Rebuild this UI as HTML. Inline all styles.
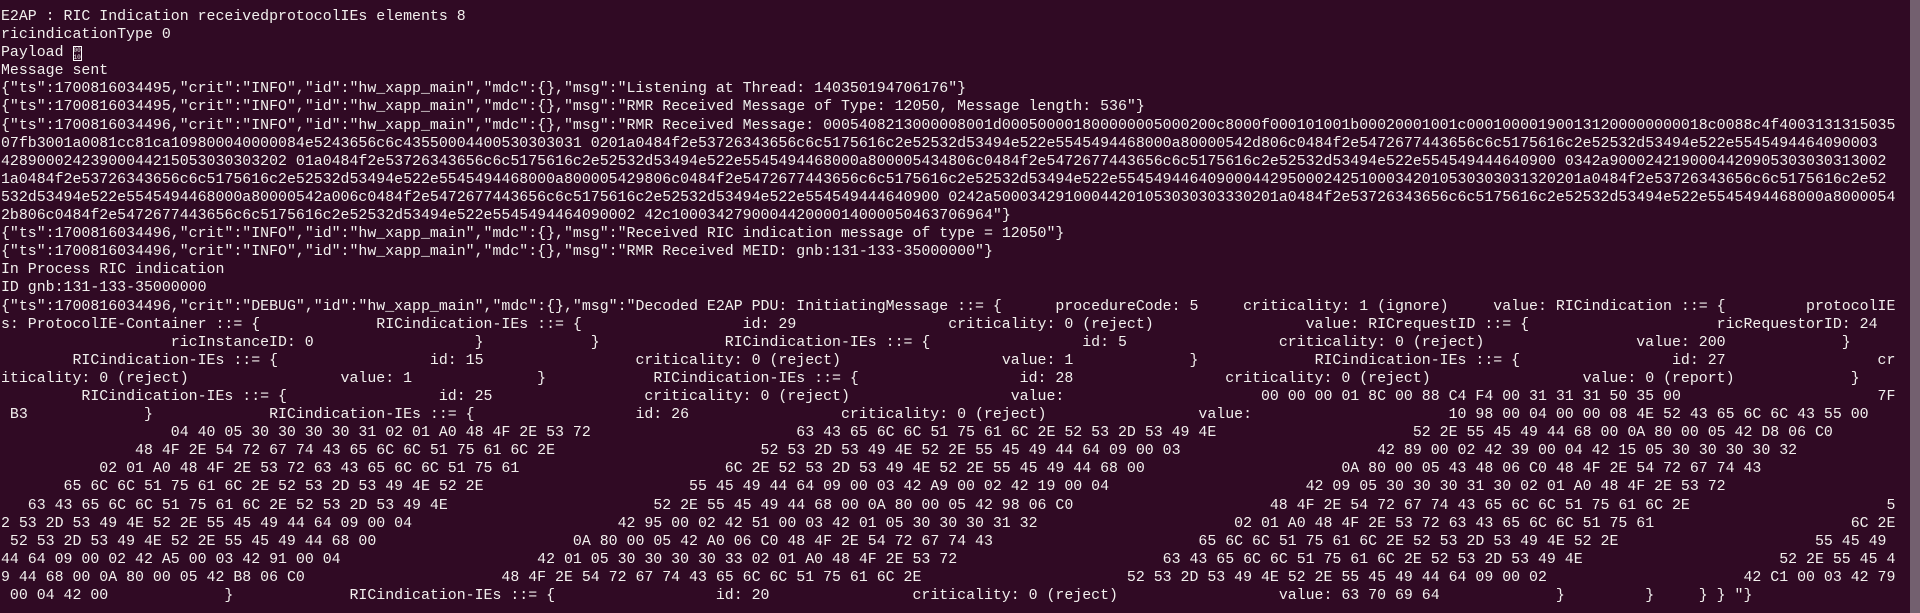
<!DOCTYPE html>
<html><head><meta charset="utf-8"><style>
html,body{margin:0;padding:0;background:#300a24;}
body{width:1920px;height:613px;overflow:hidden;position:relative;font-family:"Liberation Mono",monospace;font-size:14.9px;color:#f2f0ee;}
#t{position:absolute;left:1px;top:8px;width:212ch;}
.l{position:relative;height:18.1px;line-height:18.1px;white-space:pre;overflow:hidden;width:212ch;}
.l span{position:absolute;top:0;}
#sb{position:absolute;left:1910px;top:0;width:10px;height:613px;background:#73606f;}
.box{display:inline-block;width:9px;height:15px;border:1px solid #fff;vertical-align:-3px;font-size:6px;line-height:7px;text-align:center;box-sizing:border-box;}
</style></head><body>
<div id="t">
<div class="l">E2AP : RIC Indication receivedprotocolIEs elements 8</div>
<div class="l">ricindicationType 0</div>
<div class="l">Payload <span class="box" style="position:static">00<br>10</span></div>
<div class="l">Message sent</div>
<div class="l">{"ts":1700816034495,"crit":"INFO","id":"hw_xapp_main","mdc":{},"msg":"Listening at Thread: 140350194706176"}</div>
<div class="l">{"ts":1700816034495,"crit":"INFO","id":"hw_xapp_main","mdc":{},"msg":"RMR Received Message of Type: 12050, Message length: 536"}</div>
<div class="l">{"ts":1700816034496,"crit":"INFO","id":"hw_xapp_main","mdc":{},"msg":"RMR Received Message: 0005408213000008001d000500001800000005000200c8000f000101001b00020001001c000100001900131200000000018c0088c4f40031313150350</div>
<div class="l">07fb3001a0081cc81ca109800040000084e5243656c6c43550004400530303031 0201a0484f2e53726343656c6c5175616c2e52532d53494e522e5545494468000a80000542d806c0484f2e5472677443656c6c5175616c2e52532d53494e522e5545494464090003</div>
<div class="l">42890002423900044215053030303202 01a0484f2e53726343656c6c5175616c2e52532d53494e522e5545494468000a800005434806c0484f2e5472677443656c6c5175616c2e52532d53494e522e554549444640900 0342a9000242190004420905303030313002 0</div>
<div class="l">1a0484f2e53726343656c6c5175616c2e52532d53494e522e5545494468000a800005429806c0484f2e5472677443656c6c5175616c2e52532d53494e522e5545494464090004429500024251000342010530303031320201a0484f2e53726343656c6c5175616c2e52</div>
<div class="l">532d53494e522e5545494468000a80000542a006c0484f2e5472677443656c6c5175616c2e52532d53494e522e554549444640900 0242a50003429100044201053030303330201a0484f2e53726343656c6c5175616c2e52532d53494e522e5545494468000a8000054</div>
<div class="l">2b806c0484f2e5472677443656c6c5175616c2e52532d53494e522e5545494464090002 42c100034279000442000014000050463706964"}</div>
<div class="l">{"ts":1700816034496,"crit":"INFO","id":"hw_xapp_main","mdc":{},"msg":"Received RIC indication message of type = 12050"}</div>
<div class="l">{"ts":1700816034496,"crit":"INFO","id":"hw_xapp_main","mdc":{},"msg":"RMR Received MEID: gnb:131-133-35000000"}</div>
<div class="l">In Process RIC indication</div>
<div class="l">ID gnb:131-133-35000000</div>
<div class="l"><span style="left:0ch">{"ts":1700816034496,"crit":"DEBUG","id":"hw_xapp_main","mdc":{},"msg":"Decoded E2AP PDU: InitiatingMessage ::= {</span><span style="left:118ch">procedureCode: 5</span><span style="left:139ch">criticality: 1 (ignore)</span><span style="left:167ch">value: RICindication ::= {</span><span style="left:202ch">protocolIE</span></div>
<div class="l"><span style="left:0ch">s: ProtocolIE-Container ::= {</span><span style="left:42ch">RICindication-IEs ::= {</span><span style="left:83ch">id: 29</span><span style="left:106ch">criticality: 0 (reject)</span><span style="left:146ch">value: RICrequestID ::= {</span><span style="left:192ch">ricRequestorID: 24</span></div>
<div class="l"><span style="left:19ch">ricInstanceID: 0</span><span style="left:53ch">}</span><span style="left:66ch">}</span><span style="left:81ch">RICindication-IEs ::= {</span><span style="left:121ch">id: 5</span><span style="left:143ch">criticality: 0 (reject)</span><span style="left:183ch">value: 200</span><span style="left:206ch">}</span></div>
<div class="l"><span style="left:8ch">RICindication-IEs ::= {</span><span style="left:48ch">id: 15</span><span style="left:71ch">criticality: 0 (reject)</span><span style="left:112ch">value: 1</span><span style="left:133ch">}</span><span style="left:147ch">RICindication-IEs ::= {</span><span style="left:187ch">id: 27</span><span style="left:210ch">cr</span></div>
<div class="l"><span style="left:0ch">iticality: 0 (reject)</span><span style="left:38ch">value: 1</span><span style="left:60ch">}</span><span style="left:73ch">RICindication-IEs ::= {</span><span style="left:114ch">id: 28</span><span style="left:137ch">criticality: 0 (reject)</span><span style="left:177ch">value: 0 (report)</span><span style="left:207ch">}</span></div>
<div class="l"><span style="left:9ch">RICindication-IEs ::= {</span><span style="left:49ch">id: 25</span><span style="left:72ch">criticality: 0 (reject)</span><span style="left:113ch">value:</span><span style="left:141ch">00 00 00 01 8C 00 88 C4 F4 00 31 31 31 50 35 00</span><span style="left:210ch">7F</span></div>
<div class="l"><span style="left:1ch">B3</span><span style="left:16ch">}</span><span style="left:30ch">RICindication-IEs ::= {</span><span style="left:71ch">id: 26</span><span style="left:94ch">criticality: 0 (reject)</span><span style="left:134ch">value:</span><span style="left:162ch">10 98 00 04 00 00 08 4E 52 43 65 6C 6C 43 55 00</span></div>
<div class="l"><span style="left:19ch">04 40 05 30 30 30 30 31 02 01 A0 48 4F 2E 53 72</span><span style="left:89ch">63 43 65 6C 6C 51 75 61 6C 2E 52 53 2D 53 49 4E</span><span style="left:158ch">52 2E 55 45 49 44 68 00 0A 80 00 05 42 D8 06 C0</span></div>
<div class="l"><span style="left:15ch">48 4F 2E 54 72 67 74 43 65 6C 6C 51 75 61 6C 2E</span><span style="left:85ch">52 53 2D 53 49 4E 52 2E 55 45 49 44 64 09 00 03</span><span style="left:154ch">42 89 00 02 42 39 00 04 42 15 05 30 30 30 30 32</span></div>
<div class="l"><span style="left:11ch">02 01 A0 48 4F 2E 53 72 63 43 65 6C 6C 51 75 61</span><span style="left:81ch">6C 2E 52 53 2D 53 49 4E 52 2E 55 45 49 44 68 00</span><span style="left:150ch">0A 80 00 05 43 48 06 C0 48 4F 2E 54 72 67 74 43</span></div>
<div class="l"><span style="left:7ch">65 6C 6C 51 75 61 6C 2E 52 53 2D 53 49 4E 52 2E</span><span style="left:77ch">55 45 49 44 64 09 00 03 42 A9 00 02 42 19 00 04</span><span style="left:146ch">42 09 05 30 30 30 31 30 02 01 A0 48 4F 2E 53 72</span></div>
<div class="l"><span style="left:3ch">63 43 65 6C 6C 51 75 61 6C 2E 52 53 2D 53 49 4E</span><span style="left:73ch">52 2E 55 45 49 44 68 00 0A 80 00 05 42 98 06 C0</span><span style="left:142ch">48 4F 2E 54 72 67 74 43 65 6C 6C 51 75 61 6C 2E</span><span style="left:211ch">5</span></div>
<div class="l"><span style="left:0ch">2 53 2D 53 49 4E 52 2E 55 45 49 44 64 09 00 04</span><span style="left:69ch">42 95 00 02 42 51 00 03 42 01 05 30 30 30 31 32</span><span style="left:138ch">02 01 A0 48 4F 2E 53 72 63 43 65 6C 6C 51 75 61</span><span style="left:207ch">6C 2E</span></div>
<div class="l"><span style="left:1ch">52 53 2D 53 49 4E 52 2E 55 45 49 44 68 00</span><span style="left:64ch">0A 80 00 05 42 A0 06 C0 48 4F 2E 54 72 67 74 43</span><span style="left:134ch">65 6C 6C 51 75 61 6C 2E 52 53 2D 53 49 4E 52 2E</span><span style="left:203ch">55 45 49</span></div>
<div class="l"><span style="left:0ch">44 64 09 00 02 42 A5 00 03 42 91 00 04</span><span style="left:60ch">42 01 05 30 30 30 30 33 02 01 A0 48 4F 2E 53 72</span><span style="left:130ch">63 43 65 6C 6C 51 75 61 6C 2E 52 53 2D 53 49 4E</span><span style="left:199ch">52 2E 55 45 4</span></div>
<div class="l"><span style="left:0ch">9 44 68 00 0A 80 00 05 42 B8 06 C0</span><span style="left:56ch">48 4F 2E 54 72 67 74 43 65 6C 6C 51 75 61 6C 2E</span><span style="left:126ch">52 53 2D 53 49 4E 52 2E 55 45 49 44 64 09 00 02</span><span style="left:195ch">42 C1 00 03 42 79</span></div>
<div class="l"><span style="left:1ch">00 04 42 00</span><span style="left:25ch">}</span><span style="left:39ch">RICindication-IEs ::= {</span><span style="left:80ch">id: 20</span><span style="left:102ch">criticality: 0 (reject)</span><span style="left:143ch">value: 63 70 69 64</span><span style="left:174ch">}</span><span style="left:184ch">}</span><span style="left:190ch">} } "}</span></div>
</div>
<div id="sb"></div>
</body></html>
